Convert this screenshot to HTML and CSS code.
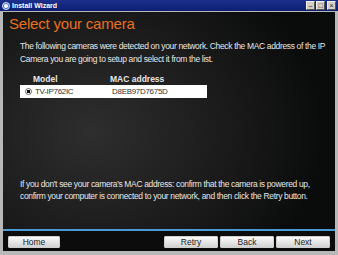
FILE: index.html
```html
<!DOCTYPE html>
<html lang="en">
<head>
  <meta charset="UTF-8">
  <title>Install Wizard</title>
  <link rel="stylesheet" href="styles.css">
</head>
<body>
  <div class="window">
    <div class="titlebar">
      <span class="app-icon"></span>
      <span class="title">Install Wizard</span>
      <div class="controls">
        <span class="ctl">&#8211;</span>
        <span class="ctl">&#9633;</span>
        <span class="ctl close">&#215;</span>
      </div>
    </div>
    <div class="content">
      <h1>Select your camera</h1>
      <p class="intro">The following cameras were detected on your network. Check the MAC address of the IP Camera you are going to setup and select it from the list.</p>
      <div class="cam-table">
        <div class="cam-head">
          <span class="col-model">Model</span>
          <span class="col-mac">MAC address</span>
        </div>
        <div class="cam-row">
          <span class="radio"></span>
          <span class="col-model">TV-IP762IC</span>
          <span class="col-mac">D8EB97D7675D</span>
        </div>
      </div>
      <p class="hint">If you don't see your camera's MAC address: confirm that the camera is powered up, confirm your computer is connected to your network, and then click the Retry button.</p>
    </div>
    <div class="buttons">
      <button>Home</button>
      <div class="spacer"></div>
      <button>Retry</button>
      <button>Back</button>
      <button>Next</button>
    </div>
  </div>
</body>
</html>
```

FILE: styles.css
```css
body {
  margin: 0;
  width: 338px;
  height: 255px;
  overflow: hidden;
  font-family: 'Liberation Sans', Arial, sans-serif;
}
.window {
  width: 338px;
  height: 255px;
  box-sizing: border-box;
  background-color: #b8b8b8;
  padding: 0 3px 4px 3px;
  display: flex;
  flex-direction: column;
}
.titlebar {
  height: 11px;
  margin: 0 -3px 1px -3px;
  background: linear-gradient(#1c2f8c, #0c1f74);
  display: flex;
  align-items: center;
  padding: 0 2px;
  color: #fff;
}
.app-icon {
  width: 6px;
  height: 6px;
  border-radius: 50%;
  background: radial-gradient(circle, #fff 1.5px, #3c6cc8 2.5px);
  border: 1px solid #dfe8ff;
  margin-right: 2px;
}
.title {
  font-size: 7px;
  font-weight: bold;
}
.controls {
  margin-left: auto;
  display: flex;
  gap: 1px;
}
.ctl {
  width: 7px;
  height: 7px;
  background: #d4d0c8;
  color: #222;
  font-size: 7px;
  line-height: 7px;
  text-align: center;
  border: 1px solid #f0f0f0;
  border-right-color: #555;
  border-bottom-color: #555;
}
.ctl.close {
  margin-left: 1px;
}
.content {
  flex: 1;
  background: radial-gradient(ellipse 230px 190px at 90px 120px, #2e2e2e 0%, #1a1a1a 60%, #0a0c0b 100%);
  padding: 3px 6px 0 6px;
  color: #e6e6e6;
}
h1 {
  margin: 0;
  font-size: 15px;
  font-weight: normal;
  color: #e8701c;
  letter-spacing: -0.2px;
}
.intro,
.hint {
  margin: 0;
  padding-left: 11px;
  font-size: 8.5px;
  letter-spacing: -0.35px;
}
.intro {
  margin-top: 8px;
  line-height: 12.5px;
}
.cam-table {
  margin: 9px 0 0 11px;
  width: 187px;
}
.cam-head {
  display: flex;
  font-size: 8.5px;
  font-weight: bold;
  height: 11px;
  padding-left: 13px;
}
.cam-row {
  display: flex;
  align-items: center;
  background: #fff;
  color: #333;
  height: 13px;
  font-size: 8px;
  padding-left: 5px;
  letter-spacing: -0.3px;
}
.radio {
  width: 5px;
  height: 5px;
  border-radius: 50%;
  border: 1px solid #666;
  background: radial-gradient(circle, #111 1.5px, #fff 2px);
  margin-right: 3px;
}
.col-model {
  width: 77px;
}
.hint {
  margin-top: 81px;
  line-height: 11.5px;
}
.buttons {
  height: 19px;
  border-top: 2px solid #4a9ad4;
  background: #0c0c0c;
  display: flex;
  align-items: center;
  padding: 1px 5px 0 5px;
  gap: 2px;
}
.spacer {
  flex: 1;
}
button {
  width: 54px;
  height: 12px;
  padding: 0;
  border: 1px solid #cfcfcf;
  border-radius: 1px;
  background: linear-gradient(#fafafa, #e6e6e6 50%, #d2d2d2);
  font-family: 'Liberation Sans', Arial, sans-serif;
  font-size: 8.5px;
  color: #222;
}
button:first-child {
  width: 52px;
}
```
